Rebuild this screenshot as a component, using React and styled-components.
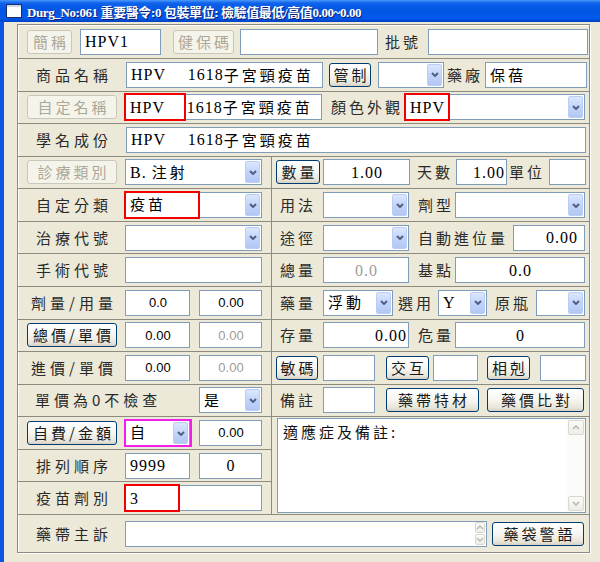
import React from 'react';
import styled, { createGlobalStyle } from 'styled-components';

const GlobalStyle = createGlobalStyle`
  html, body {
    margin: 0;
    padding: 0;
    background: #ECE9D8;
  }
  body {
    font-family: "Liberation Serif", "Noto Sans CJK TC", serif;
  }
`;

const LINE = '#8D8B80';

const Window = styled.div`
  width: 600px;
  height: 562px;
  display: flex;
  flex-direction: column;
  background: #ECE9D8;
  overflow: hidden;
`;

const TitleBar = styled.div`
  flex: none;
  height: 22px;
  display: flex;
  align-items: center;
  gap: 5px;
  padding-left: 6px;
  background: linear-gradient(180deg, #4A97FB 0%, #0F62EA 14%, #0255E2 45%, #0259EE 82%, #0042C4 100%);
  color: #fff;
  font: bold 13px "Liberation Serif", "Noto Sans CJK TC", serif;
  white-space: nowrap;
`;

const TitleText = styled.span`
  text-shadow: 1px 1px 0 #0A1E74;
  letter-spacing: -0.4px;
`;

const Body = styled.div`
  flex: 1;
  display: flex;
  border-left: 4px solid #0A55E3;
  padding: 2px 10px 9px 13px;
`;

const Panel = styled.div`
  flex: 1;
  display: grid;
  grid-template-columns: 254px 1fr;
  grid-template-rows: 34px repeat(14, 1fr) 37px;
  border: 1px solid ${LINE};
  box-shadow: inset 1px 1px 0 #fff, 1px 1px 0 #fff;
`;

const Row = styled.div`
  grid-column: ${p => (p.$full ? '1 / -1' : 'auto')};
  grid-row: ${p => (p.$rows ? `span ${p.$rows}` : 'auto')};
  display: flex;
  align-items: center;
  min-width: 0;
  box-sizing: border-box;
  padding-left: ${p => p.$pl ?? 9}px;
  border-bottom: ${p => (p.$last ? 'none' : `1px solid ${LINE}`)};
  border-right: ${p => (p.$left ? `1px solid ${LINE}` : 'none')};
`;

const Label = styled.span`
  flex: none;
  box-sizing: border-box;
  width: ${p => (p.$w ? `${p.$w}px` : 'auto')};
  margin-left: ${p => p.$ml || 0}px;
  padding-left: ${p => p.$pl ?? 0}px;
  text-align: ${p => p.$align || 'left'};
  font: 15px/1.2 "Noto Sans CJK TC", sans-serif;
  letter-spacing: ${p => p.$ls ?? 3}px;
  color: #2a2a2a;
  white-space: nowrap;
`;

const Btn = styled.button`
  flex: none;
  box-sizing: border-box;
  width: ${p => p.$w}px;
  height: ${p => p.$h || 24}px;
  margin: 0 0 0 ${p => p.$ml || 0}px;
  padding: 0 0 0 3px;
  border-radius: 3px;
  border: 1px solid ${p => (p.disabled ? '#C9C7BA' : '#003C74')};
  background: ${p =>
    p.disabled
      ? '#F5F4EA'
      : 'linear-gradient(180deg, #FFFFFF 0%, #F6F5F0 50%, #E8E5DA 85%, #D6D0C3 100%)'};
  color: ${p => (p.disabled ? '#ACA899' : '#1a1a1a')};
  font: 15px/1.2 "Noto Sans CJK TC", sans-serif;
  letter-spacing: 3px;
  white-space: nowrap;
  cursor: default;
`;

const Field = styled.div`
  flex: none;
  position: relative;
  box-sizing: border-box;
  width: ${p => p.$w}px;
  height: ${p => p.$h || 26}px;
  margin-left: ${p => p.$ml || 0}px;
  border: 1px solid #7F9DB9;
  background: #fff;
  display: flex;
  align-items: center;
  justify-content: ${p =>
    p.$align === 'center' ? 'center' : p.$align === 'right' ? 'flex-end' : 'flex-start'};
  padding: 0 ${p => p.$pr ?? 3}px 0 ${p => p.$pl ?? 4}px;
  font: ${p =>
    p.$sans
      ? '13px/1.2 "Liberation Sans", sans-serif'
      : '16px/1.2 "Liberation Serif", "Noto Sans CJK TC", serif'};
  letter-spacing: ${p => (p.$sans ? 0 : 1)}px;
  color: ${p => (p.$muted ? '#9C9C9C' : '#000')};
  white-space: nowrap;
`;

const Han = styled.span`
  font: 15px/1.2 "Noto Sans CJK TC", sans-serif;
  letter-spacing: 3px;
`;

const SelectText = styled.span`
  flex: 1;
  min-width: 0;
`;

const DropBtn = styled.span`
  flex: none;
  align-self: stretch;
  width: 15px;
  margin: 1px 0;
  box-sizing: border-box;
  border: 1px solid #BACDF4;
  border-radius: 2px;
  background: linear-gradient(180deg, #DCE7FD 0%, #C3D4FA 50%, #B2C7F4 100%);
  display: flex;
  align-items: center;
  justify-content: center;
`;

const Mark = styled.span`
  position: absolute;
  left: -2px;
  top: -2px;
  bottom: -2px;
  width: ${p => p.$w}px;
  box-sizing: border-box;
  border: 2px solid ${p => p.$c || '#F00000'};
  pointer-events: none;
`;

const Memo = styled.div`
  flex: none;
  box-sizing: border-box;
  width: 309px;
  height: 95px;
  margin-left: 1px;
  border: 1px solid #7F9DB9;
  background: #fff;
  display: flex;
`;

const MemoText = styled.div`
  flex: 1;
  padding: 4px 5px;
  font: 15px/1.2 "Noto Sans CJK TC", sans-serif;
  letter-spacing: 3px;
  color: #111;
`;

const ScrollBar = styled.div`
  flex: none;
  width: 16px;
  display: flex;
  flex-direction: column;
  justify-content: space-between;
  padding: 1px;
  background: #FBFBF9;
`;

const ScrollBtn = styled.span`
  flex: none;
  height: ${p => p.$h || 15}px;
  box-sizing: border-box;
  border: 1px solid #D9D7CF;
  border-radius: 2px;
  background: linear-gradient(180deg, #FAFAF8 0%, #EEEDE8 100%);
  display: flex;
  align-items: center;
  justify-content: center;
`;

const Spinner = styled.div`
  flex: none;
  margin-left: auto;
  display: flex;
  flex-direction: column;
  gap: 1px;
  margin-right: -2px;
`;

const Chevron = ({ up, color = '#4D6185', w = 2 }) => (
  <svg width="8" height="5" viewBox="0 0 8 5">
    <polyline
      points={up ? '1,4 4,1 7,4' : '1,1 4,4 7,1'}
      fill="none"
      stroke={color}
      strokeWidth={w}
    />
  </svg>
);

const AppIcon = () => (
  <svg width="16" height="14" viewBox="0 0 16 14">
    <rect x="0.5" y="0.5" width="15" height="13" fill="#fff" stroke="#1B2E6B" />
    <rect x="1" y="1" width="14" height="2" fill="#C9D6EE" />
  </svg>
);

function Select({ w, ml, children, mark, markColor }) {
  return (
    <Field $w={w} $ml={ml} $pr={1}>
      <SelectText>{children}</SelectText>
      <DropBtn>
        <Chevron />
      </DropBtn>
      {mark && <Mark $w={mark} $c={markColor} />}
    </Field>
  );
}

export default function App() {
  return (
    <Window>
      <GlobalStyle />
      <TitleBar>
        <AppIcon />
        <TitleText>Durg_No:061 重要醫令:0 包裝單位: 檢驗值最低/高值0.00~0.00</TitleText>
      </TitleBar>
      <Body>
        <Panel>
          <Row $full>
            <Btn $w={45} disabled>簡稱</Btn>
            <Field $w={81} $ml={8}>HPV1</Field>
            <Btn $w={61} $ml={12} disabled>健保碼</Btn>
            <Field $w={138} $ml={6} />
            <Label $w={43} $ml={7}>批號</Label>
            <Field $w={160} />
          </Row>

          <Row $full>
            <Label $w={90} $align="center" $ls={4} $pl={4}>商品名稱</Label>
            <Field $w={197} $ml={9}>HPV　 1618<Han>子宮頸疫苗</Han></Field>
            <Btn $w={42} $ml={6}>管制</Btn>
            <Select w={66} ml={7} />
            <Label $w={38} $ml={3}>藥廠</Label>
            <Field $w={102}><Han>保蓓</Han></Field>
          </Row>

          <Row $full>
            <Btn $w={90} disabled>自定名稱</Btn>
            <Field $w={197} $ml={8}>
              HPV　 1618<Han>子宮頸疫苗</Han>
              <Mark $w={62} />
            </Field>
            <Label $w={74} $ml={9}>顏色外觀</Label>
            <Select w={180} mark={46}>HPV</Select>
          </Row>

          <Row $full>
            <Label $w={90} $align="center" $ls={4} $pl={4}>學名成份</Label>
            <Field $w={460} $ml={9}>HPV　 1618<Han>子宮頸疫苗</Han></Field>
          </Row>

          {/* 1 */}
          <Row $left>
            <Btn $w={90} disabled>診療類別</Btn>
            <Select w={137} ml={8}>B. <Han>注射</Han></Select>
          </Row>
          <Row $pl={4}>
            <Btn $w={44}>數量</Btn>
            <Field $w={87} $ml={3} $align="center">1.00</Field>
            <Label $w={39} $ml={7}>天數</Label>
            <Field $w={51} $align="right" $pr={1}>1.00</Field>
            <Label $w={40} $ml={2}>單位</Label>
            <Field $w={37} />
          </Row>

          {/* 2 */}
          <Row $left>
            <Label $w={90} $align="center" $ls={4} $pl={4}>自定分類</Label>
            <Select w={137} ml={8} mark={76}><Han>疫苗</Han></Select>
          </Row>
          <Row $pl={4}>
            <Label $w={47} $pl={4}>用法</Label>
            <Select w={86} />
            <Label $w={46} $pl={9}>劑型</Label>
            <Select w={130} />
          </Row>

          {/* 3 */}
          <Row $left>
            <Label $w={90} $align="center" $ls={4} $pl={4}>治療代號</Label>
            <Select w={137} ml={8} />
          </Row>
          <Row $pl={4}>
            <Label $w={47} $pl={4}>途徑</Label>
            <Select w={86} />
            <Label $w={104} $pl={9}>自動進位量</Label>
            <Field $w={72} $align="right" $pr={6}>0.00</Field>
          </Row>

          {/* 4 */}
          <Row $left>
            <Label $w={90} $align="center" $ls={4} $pl={4}>手術代號</Label>
            <Field $w={137} $ml={8} />
          </Row>
          <Row $pl={4}>
            <Label $w={47} $pl={4}>總量</Label>
            <Field $w={86} $align="center" $muted>0.0</Field>
            <Label $w={46} $pl={9}>基點</Label>
            <Field $w={130} $align="center">0.0</Field>
          </Row>

          {/* 5 */}
          <Row $left>
            <Label $w={90} $align="center" $ls={4} $pl={4}>劑量/用量</Label>
            <Field $w={65} $ml={8} $align="center" $sans>0.0</Field>
            <Field $w={63} $ml={9} $align="center" $sans>0.00</Field>
          </Row>
          <Row $pl={4}>
            <Label $w={47} $pl={4}>藥量</Label>
            <Select w={70}><Han>浮動</Han></Select>
            <Label $w={45} $pl={5}>選用</Label>
            <Select w={49}>Y</Select>
            <Label $w={49} $pl={8}>原瓶</Label>
            <Select w={49} />
          </Row>

          {/* 6 */}
          <Row $left>
            <Btn $w={90}>總價/單價</Btn>
            <Field $w={65} $ml={8} $align="center" $sans>0.00</Field>
            <Field $w={63} $ml={9} $align="center" $sans $muted>0.00</Field>
          </Row>
          <Row $pl={4}>
            <Label $w={47} $pl={4}>存量</Label>
            <Field $w={86} $align="right" $pr={1}>0.00</Field>
            <Label $w={46} $pl={9}>危量</Label>
            <Field $w={130} $align="center">0</Field>
          </Row>

          {/* 7 */}
          <Row $left>
            <Label $w={90} $align="center" $ls={4} $pl={4}>進價/單價</Label>
            <Field $w={65} $ml={8} $align="center" $sans>0.00</Field>
            <Field $w={63} $ml={9} $align="center" $sans $muted>0.00</Field>
          </Row>
          <Row $pl={4}>
            <Btn $w={42}>敏碼</Btn>
            <Field $w={52} $ml={5} />
            <Btn $w={43} $ml={11}>交互</Btn>
            <Field $w={45} $ml={4} />
            <Btn $w={43} $ml={9}>相剋</Btn>
            <Field $w={46} $ml={10} />
          </Row>

          {/* 8 */}
          <Row $left>
            <Label $w={172} $pl={8} $ls={4}>單價為0不檢查</Label>
            <Select w={63}><Han>是</Han></Select>
          </Row>
          <Row $pl={4}>
            <Label $w={47} $pl={4}>備註</Label>
            <Field $w={52} />
            <Btn $w={93} $ml={11}>藥帶特材</Btn>
            <Btn $w={97} $ml={8}>藥價比對</Btn>
          </Row>

          {/* 9 */}
          <Row $left>
            <Btn $w={90}>自費/金額</Btn>
            <Select w={65} ml={8} mark={68} markColor="#F020E8"><Han>自</Han></Select>
            <Field $w={63} $ml={9} $align="center" $sans>0.00</Field>
          </Row>
          <Row $rows={3} $pl={4}>
            <Memo>
              <MemoText>適應症及備註:</MemoText>
              <ScrollBar>
                <ScrollBtn>
                  <Chevron up color="#B9B8B2" w={1.6} />
                </ScrollBtn>
                <ScrollBtn>
                  <Chevron color="#B9B8B2" w={1.6} />
                </ScrollBtn>
              </ScrollBar>
            </Memo>
          </Row>

          {/* 10 */}
          <Row $left>
            <Label $w={90} $align="center" $ls={4} $pl={4}>排列順序</Label>
            <Field $w={65} $ml={8}>9999</Field>
            <Field $w={63} $ml={9} $align="center">0</Field>
          </Row>

          {/* 11 */}
          <Row $left>
            <Label $w={90} $align="center" $ls={4} $pl={4}>疫苗劑別</Label>
            <Field $w={137} $ml={8}>
              3
              <Mark $w={56} />
            </Field>
          </Row>

          <Row $full $last>
            <Label $w={90} $align="center" $ls={4} $pl={4}>藥帶主訴</Label>
            <Field $w={362} $ml={8}>
              <Spinner>
                <ScrollBtn $h={11}>
                  <Chevron up color="#B9B8B2" w={1.4} />
                </ScrollBtn>
                <ScrollBtn $h={11}>
                  <Chevron color="#B9B8B2" w={1.4} />
                </ScrollBtn>
              </Spinner>
            </Field>
            <Btn $w={92} $ml={5}>藥袋警語</Btn>
          </Row>
        </Panel>
      </Body>
    </Window>
  );
}
